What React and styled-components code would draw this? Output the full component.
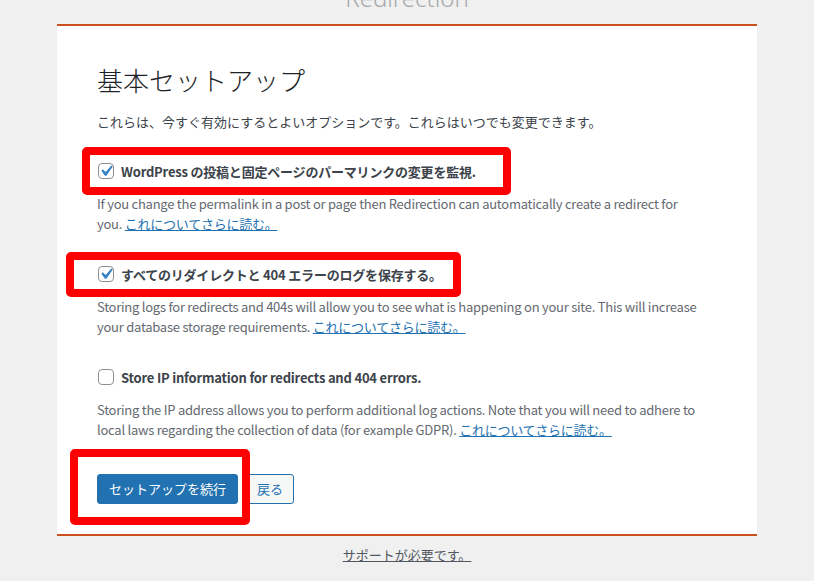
import React from "react";
import styled, { createGlobalStyle } from "styled-components";

const GlobalStyle = createGlobalStyle`
  html, body {
    margin: 0;
    padding: 0;
    background: #f0f0f1;
  }
  body {
    font-family: "Noto Sans CJK JP", "Noto Sans", sans-serif;
    font-size: 13px;
    color: #3c434a;
  }
`;

const Page = styled.div`
  width: 700px;
  margin: 0 auto;
  overflow: hidden;
  min-height: 581px;
`;

const SiteTitle = styled.h1`
  margin: -14px 0 14px;
  height: 24px;
  font-family: "Noto Sans", sans-serif;
  font-weight: 300;
  font-size: 24px;
  line-height: 24px;
  text-align: center;
  color: #a7aaad;
`;

const Card = styled.div`
  background: #fff;
  border-top: 2px solid #c9501f;
  border-bottom: 2px solid #c9501f;
  padding: 37px 40px 30px;
`;

const Heading = styled.h2`
  margin: 0 0 15px;
  font-size: 26px;
  line-height: 34px;
  font-weight: 300;
  color: #1d2327;
`;

const Intro = styled.p`
  margin: 0 0 29px;
  line-height: 20px;
  color: #3c434a;
`;

const Section = styled.div`
  margin-bottom: ${(p) => p.$gap}px;
`;

const OptionRow = styled.label`
  position: relative;
  display: flex;
  align-items: center;
  gap: 7px;
  height: 20px;
  padding-left: 1px;
  font-weight: 700;
  letter-spacing: -0.2px;
  color: #3c434a;
`;

const Box = styled.span`
  position: relative;
  flex: none;
  box-sizing: border-box;
  width: 16px;
  height: 16px;
  border: 1px solid #8c8f94;
  border-radius: 4px;
  background: #fff;

  svg {
    position: absolute;
    left: -4px;
    top: -4px;
  }
`;

const Description = styled.p`
  max-width: 602px;
  margin: 13px 0 0;
  line-height: 19.5px;
  letter-spacing: -0.25px;
  color: #646970;

  a {
    color: #2271b1;
    text-decoration: underline;
  }
`;

const Highlight = styled.span`
  position: absolute;
  left: ${(p) => p.$x}px;
  top: ${(p) => p.$y}px;
  width: ${(p) => p.$w}px;
  height: ${(p) => p.$h}px;
  box-sizing: border-box;
  border: 8px solid #ff0000;
  border-radius: 5px;
  pointer-events: none;
  z-index: 2;
`;

const ButtonRow = styled.div`
  position: relative;
  display: flex;
  gap: 8px;
  margin-top: 35px;
`;

const Button = styled.button`
  box-sizing: border-box;
  height: 30px;
  padding: 0 ${(p) => (p.$primary ? 11 : 10)}px;
  border-radius: 3px;
  border: 1px solid #2271b1;
  background: ${(p) => (p.$primary ? "#2271b1" : "#f6f7f7")};
  color: ${(p) => (p.$primary ? "#fff" : "#2271b1")};
  font-family: inherit;
  font-size: 13px;
  line-height: 28px;
  cursor: pointer;
`;

const Footer = styled.div`
  margin-top: 9px;
  text-align: center;
  line-height: 20px;

  a {
    color: #50575e;
    text-decoration: underline;
  }
`;

const Check = () => (
  <svg width="22" height="22" viewBox="0 0 20 20">
    <path
      d="M14.83 4.89l1.34.94-5.81 8.38H9.02L5.78 9.67l1.34-1.25 2.57 2.4z"
      fill="#3582c4"
    />
  </svg>
);

const options = [
  {
    id: "monitor",
    checked: true,
    label: "WordPress の投稿と固定ページのパーマリンクの変更を監視.",
    text: "If you change the permalink in a post or page then Redirection can automatically create a redirect for you.",
    mark: { x: -15, y: -14, w: 429, h: 48 },
    gap: 31,
  },
  {
    id: "log",
    checked: true,
    label: "すべてのリダイレクトと 404 エラーのログを保存する。",
    text: "Storing logs for redirects and 404s will allow you to see what is happening on your site. This will increase your database storage requirements.",
    mark: { x: -31, y: -12, w: 395, h: 45 },
    gap: 31,
  },
  {
    id: "ip",
    checked: false,
    label: "Store IP information for redirects and 404 errors.",
    text: "Storing the IP address allows you to perform additional log actions. Note that you will need to adhere to local laws regarding the collection of data (for example GDPR).",
    gap: 0,
  },
];

export default function App() {
  return (
    <>
      <GlobalStyle />
      <Page>
        <SiteTitle>Redirection</SiteTitle>
        <Card>
          <Heading>基本セットアップ</Heading>
          <Intro>
            これらは、今すぐ有効にするとよいオプションです。これらはいつでも変更できます。
          </Intro>

          {options.map((opt) => (
            <Section key={opt.id} $gap={opt.gap}>
              <OptionRow>
                <Box>{opt.checked && <Check />}</Box>
                {opt.label}
                {opt.mark && (
                  <Highlight
                    $x={opt.mark.x}
                    $y={opt.mark.y}
                    $w={opt.mark.w}
                    $h={opt.mark.h}
                  />
                )}
              </OptionRow>
              <Description>
                {opt.text} <a href="#">これについてさらに読む。</a>
              </Description>
            </Section>
          ))}

          <ButtonRow>
            <Button $primary>セットアップを続行</Button>
            <Button>戻る</Button>
            <Highlight $x={-27} $y={-25} $w={180} $h={76} />
          </ButtonRow>
        </Card>
        <Footer>
          <a href="#">サポートが必要です。</a>
        </Footer>
      </Page>
    </>
  );
}
